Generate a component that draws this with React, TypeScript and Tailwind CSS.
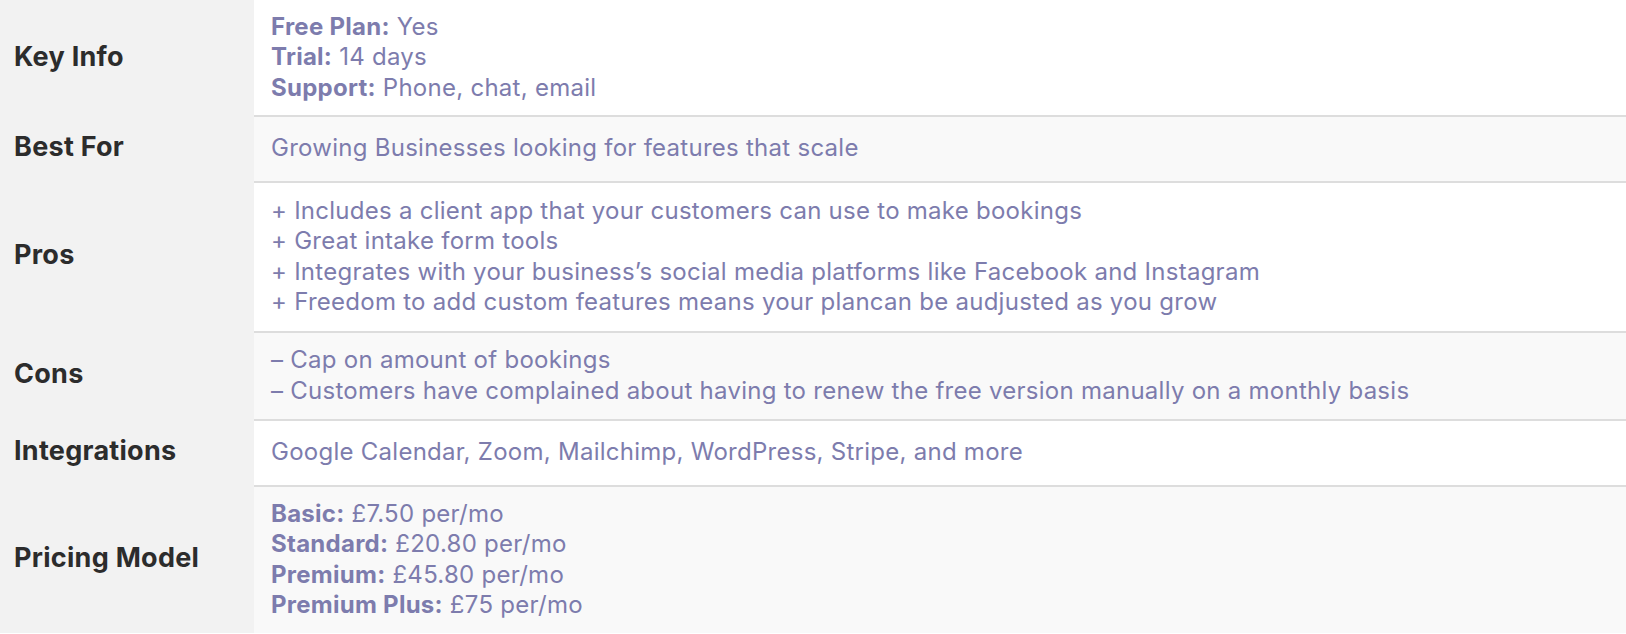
import React from "react";

const rows: { label: string; lines: React.ReactNode[]; bg: string; pad: string }[] = [
  {
    label: "Key Info",
    bg: "bg-white",
    pad: "py-[11.5px]",
    lines: [
      <><b className="font-bold">Free Plan:</b> Yes</>,
      <><b className="font-bold">Trial:</b> 14 days</>,
      <><b className="font-bold">Support:</b> Phone, chat, email</>,
    ],
  },
  {
    label: "Best For",
    bg: "bg-[#f9f9f9]",
    pad: "py-[12px]",
    lines: ["Growing Businesses looking for features that scale"],
  },
  {
    label: "Pros",
    bg: "bg-white",
    pad: "py-[13px]",
    lines: [
      "+ Includes a client app that your customers can use to make bookings",
      "+ Great intake form tools",
      "+ Integrates with your business\u2019s social media platforms like Facebook and Instagram",
      "+ Freedom to add custom features means your plancan be audjusted as you grow",
    ],
  },
  {
    label: "Cons",
    bg: "bg-[#f9f9f9]",
    pad: "py-[12.5px]",
    lines: [
      "\u2013 Cap on amount of bookings",
      "\u2013 Customers have complained about having to renew the free version manually on a monthly basis",
    ],
  },
  {
    label: "Integrations",
    bg: "bg-white",
    pad: "py-[12px]",
    lines: ["Google Calendar, Zoom, Mailchimp, WordPress, Stripe, and more"],
  },
  {
    label: "Pricing Model",
    bg: "bg-[#f9f9f9]",
    pad: "py-[12px]",
    lines: [
      <><b className="font-bold">Basic:</b> £7.50 per/mo</>,
      <><b className="font-bold">Standard:</b> £20.80 per/mo</>,
      <><b className="font-bold">Premium:</b> £45.80 per/mo</>,
      <><b className="font-bold">Premium Plus:</b> £75 per/mo</>,
    ],
  },
];

export default function App() {
  return (
    <div
      className="w-[1626px] h-[634px] overflow-hidden bg-white"
      style={{ fontFamily: "Inter, 'Noto Sans', sans-serif" }}
    >
      {rows.map((r, i) => (
        <div key={r.label} className={`flex ${i > 0 ? "min-h-[66px]" : "min-h-[64px]"}`}>
          <div className="w-[254px] shrink-0 bg-[#f2f2f2] flex items-center pl-[14px]">
            <span className="text-[27px] font-bold text-[#2c2c2c] tracking-[0.01em]">
              {r.label}
            </span>
          </div>
          <div
            className={`flex-1 ${r.bg} ${i > 0 ? "border-t-2 border-[#dddddd]" : ""} flex flex-col justify-center pl-[17px] ${r.pad}`}
          >
            {r.lines.map((l, j) => (
              <div
                key={j}
                className="text-[24px] leading-[30.5px] text-[#7d7cad] tracking-[0.011em]"
              >
                {l}
              </div>
            ))}
          </div>
        </div>
      ))}
    </div>
  );
}
